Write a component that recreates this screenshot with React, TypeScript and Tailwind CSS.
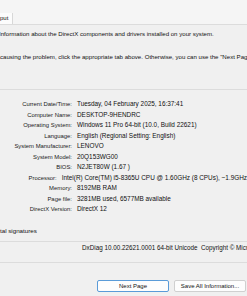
import React from "react";

const rows: [string, string][] = [
  ["Current Date/Time:", "Tuesday, 04 February 2025, 16:37:41"],
  ["Computer Name:", "DESKTOP-9HENDRC"],
  ["Operating System:", "Windows 11 Pro 64-bit (10.0, Build 22621)"],
  ["Language:", "English (Regional Setting: English)"],
  ["System Manufacturer:", "LENOVO"],
  ["System Model:", "20Q153WG00"],
  ["BIOS:", "N2JET80W (1.67 )"],
  ["Processor:", "Intel(R) Core(TM) i5-8365U CPU @ 1.60GHz (8 CPUs), ~1.9GHz"],
  ["Memory:", "8192MB RAM"],
  ["Page file:", "3281MB used, 6577MB available"],
  ["DirectX Version:", "DirectX 12"],
];

export default function App() {
  return (
    <div
      className="w-[247px] h-[296px] overflow-hidden bg-[#f0f0f0] text-[#111111] whitespace-nowrap flex flex-col"
      style={{ fontFamily: '"Liberation Sans", Arial, sans-serif', fontSize: "6px" }}
    >
      <div className="h-[13px] bg-[#f5f5f5] shrink-0" />
      <div className="h-[12px] shrink-0 flex border-b border-[#dcdcdc] bg-[#f5f5f5]">
        <div className="w-[13px] h-[11px] bg-[#fcfcfc] border-r border-[#d8d8d8] leading-[11px]">
          put
        </div>
      </div>
      <div className="mt-[5px] h-[8px] leading-[8px] ml-[-1px] text-[6.1px]">
        Information about the DirectX components and drivers installed on your system.
      </div>
      <div className="mt-[15px] h-[8px] leading-[8px] text-[6.1px]">
        causing the problem, click the appropriate tab above. Otherwise, you can use the "Next Page" button below to visit each page in sequence.
      </div>
      <div className="mt-[28px] h-px bg-[#dcdcdc] shrink-0" />
      <div className="pt-[9px] flex flex-col">
        {rows.map(([k, v]) => (
          <div key={k} className="h-[10.5px] leading-[10.5px] flex">
            <div className="w-[72px] text-right text-[#222222] text-[5.9px]">{k}</div>
            <div className="pl-[5px] text-[6.4px]">{v}</div>
          </div>
        ))}
      </div>
      <div className="mt-[12.5px] h-[8px] leading-[8px] text-[6.2px]">tal signatures</div>
      <div className="mt-[6px] h-px bg-[#dcdcdc] shrink-0" />
      <div className="mt-[2px] h-[8px] leading-[8px] pl-[82px] text-[6.3px]">
        DxDiag 10.00.22621.0001 64-bit Unicode&nbsp;&nbsp;Copyright © Microsoft. All rights reserved.
      </div>
      <div className="mt-[10px] h-px bg-[#dcdcdc] shrink-0" />
      <div className="mt-[17px] flex pl-[97px] gap-[5px]">
        <div className="w-[72px] h-[12px] bg-[#fdfdfd] border border-[#5a9bd8] rounded-[2px] flex items-center justify-center">
          Next Page
        </div>
        <div className="w-[72px] h-[12px] bg-[#fdfdfd] border border-[#d0d0d0] rounded-[2px] flex items-center justify-center">
          Save All Information...
        </div>
      </div>
    </div>
  );
}
